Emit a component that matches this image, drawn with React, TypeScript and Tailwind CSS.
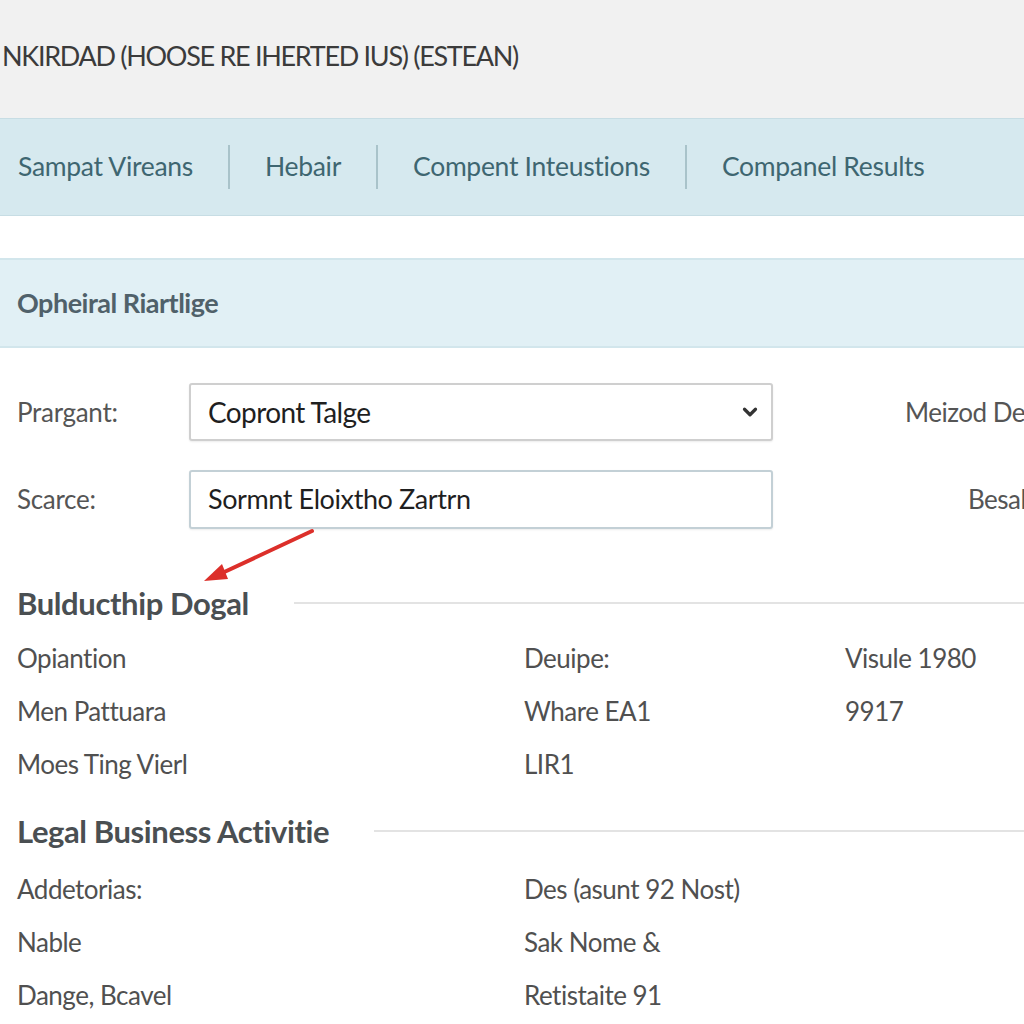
import { ChevronDown } from 'lucide-react';

const navItems = ['Sampat Vireans', 'Hebair', 'Compent Inteustions', 'Companel Results'];

const sections = [
    {
        title: 'Bulducthip Dogal',
        rows: [
            ['Opiantion', 'Deuipe:', 'Visule 1980'],
            ['Men Pattuara', 'Whare EA1', '9917'],
            ['Moes Ting Vierl', 'LIR1', ''],
        ],
    },
    {
        title: 'Legal Business Activitie',
        rows: [
            ['Addetorias:', 'Des (asunt 92 Nost)', ''],
            ['Nable', 'Sak Nome &', ''],
            ['Dange, Bcavel', 'Retistaite 91', ''],
        ],
    },
];

const SectionHeader = ({ title }: { title: string }) => (
    <div className="flex items-center h-[40px] pl-[17px] gap-[45px]">
        <h2 className="text-[31px] font-bold text-[#4a4f52] whitespace-nowrap tracking-[-0.4px]">{title}</h2>
        <div className="flex-1 h-[2px] bg-[#e3e3e3]" />
    </div>
);

export default function App() {
    return (
        <div className="relative w-[1024px] h-[1024px] overflow-hidden bg-white font-['Lato',sans-serif]">
            {/* Window title */}
            <div className="h-[118px] bg-[#f1f1f1] pt-[36px] overflow-hidden">
                <div className="pl-[2px] text-[27px] text-[#3b3b3b] tracking-[-1.3px] whitespace-nowrap">
                    NKIRDAD (HOOSE RE IHERTED IUS) (ESTEAN)
                </div>
            </div>

            {/* Tabs */}
            <nav className="h-[98px] bg-[#d6e9ef] border-y border-[#c7dde4] flex items-center pl-[18px] gap-[35px] text-[26.5px] text-[#3e6671] whitespace-nowrap tracking-[-0.3px]">
                {navItems.map((item, i) => (
                    <div key={item} className="flex items-center gap-[35px] shrink-0">
                        {i > 0 && <span className="w-[2px] h-[44px] bg-[#a9c3ca]" />}
                        <span>{item}</span>
                    </div>
                ))}
            </nav>

            <div className="h-[42px]" />

            {/* Panel header */}
            <div className="h-[90px] bg-[#e1f0f5] border-y-2 border-[#d2e6ec] flex items-center pl-[17px]">
                <h1 className="text-[27px] font-bold text-[#50616a] tracking-[-0.5px]">Opheiral Riartlige</h1>
            </div>

            {/* Form */}
            <div className="flex flex-col gap-[29px] pt-[35px] whitespace-nowrap">
                <div className="flex items-center">
                    <label className="w-[189px] shrink-0 pl-[17px] text-[26px] text-[#555] tracking-[-0.3px]">Prargant:</label>
                    <div className="w-[584px] h-[58px] shrink-0 rounded-[3px] border-2 border-[#cfcfcf] bg-white flex items-center justify-between pl-[17px] pr-[10px] shadow-[0_1px_2px_rgba(0,0,0,0.08)]">
                        <span className="text-[28px] text-[#1f1f1f] tracking-[-0.6px]">Copront Talge</span>
                        <ChevronDown size={22} strokeWidth={3.5} className="text-[#333]" />
                    </div>
                    <span className="ml-[132px] shrink-0 text-[26px] text-[#555] tracking-[-0.5px]">Meizod De</span>
                </div>
                <div className="flex items-center">
                    <label className="w-[189px] shrink-0 pl-[17px] text-[26px] text-[#555] tracking-[-0.3px]">Scarce:</label>
                    <div className="w-[584px] h-[59px] shrink-0 rounded-[3px] border-2 border-[#c3d0d6] bg-white flex items-center pl-[17px] shadow-[0_1px_2px_rgba(0,0,0,0.08)]">
                        <span className="text-[27px] text-[#1f1f1f] tracking-[-0.4px]">Sormnt Eloixtho Zartrn</span>
                    </div>
                    <span className="ml-[195px] shrink-0 text-[26px] text-[#555] tracking-[-0.5px]">Besal</span>
                </div>
            </div>

            {/* Detail sections */}
            <div className="mt-[54px]">
                {sections.map((s, si) => (
                    <div key={s.title} className={si > 0 ? 'mt-[20px]' : ''}>
                        <SectionHeader title={s.title} />
                        <div className={si > 0 ? 'mt-[12px]' : 'mt-[9px]'}>
                            {s.rows.map((r) => (
                                <div key={r[0]} className="grid grid-cols-[507px_321px_1fr] h-[53px] items-center pl-[17px] text-[26px] text-[#505050] whitespace-nowrap tracking-[-0.5px]">
                                    <span>{r[0]}</span>
                                    <span>{r[1]}</span>
                                    <span>{r[2]}</span>
                                </div>
                            ))}
                        </div>
                    </div>
                ))}
            </div>

            {/* Annotation arrow */}
            <svg className="absolute left-0 top-0 pointer-events-none" width="1024" height="1024">
                <line x1="312" y1="531" x2="220" y2="574" stroke="#dc2f2a" strokeWidth="4" strokeLinecap="round" />
                <polygon points="204,581 222,564 228,579" fill="#dc2f2a" />
            </svg>
        </div>
    );
}
